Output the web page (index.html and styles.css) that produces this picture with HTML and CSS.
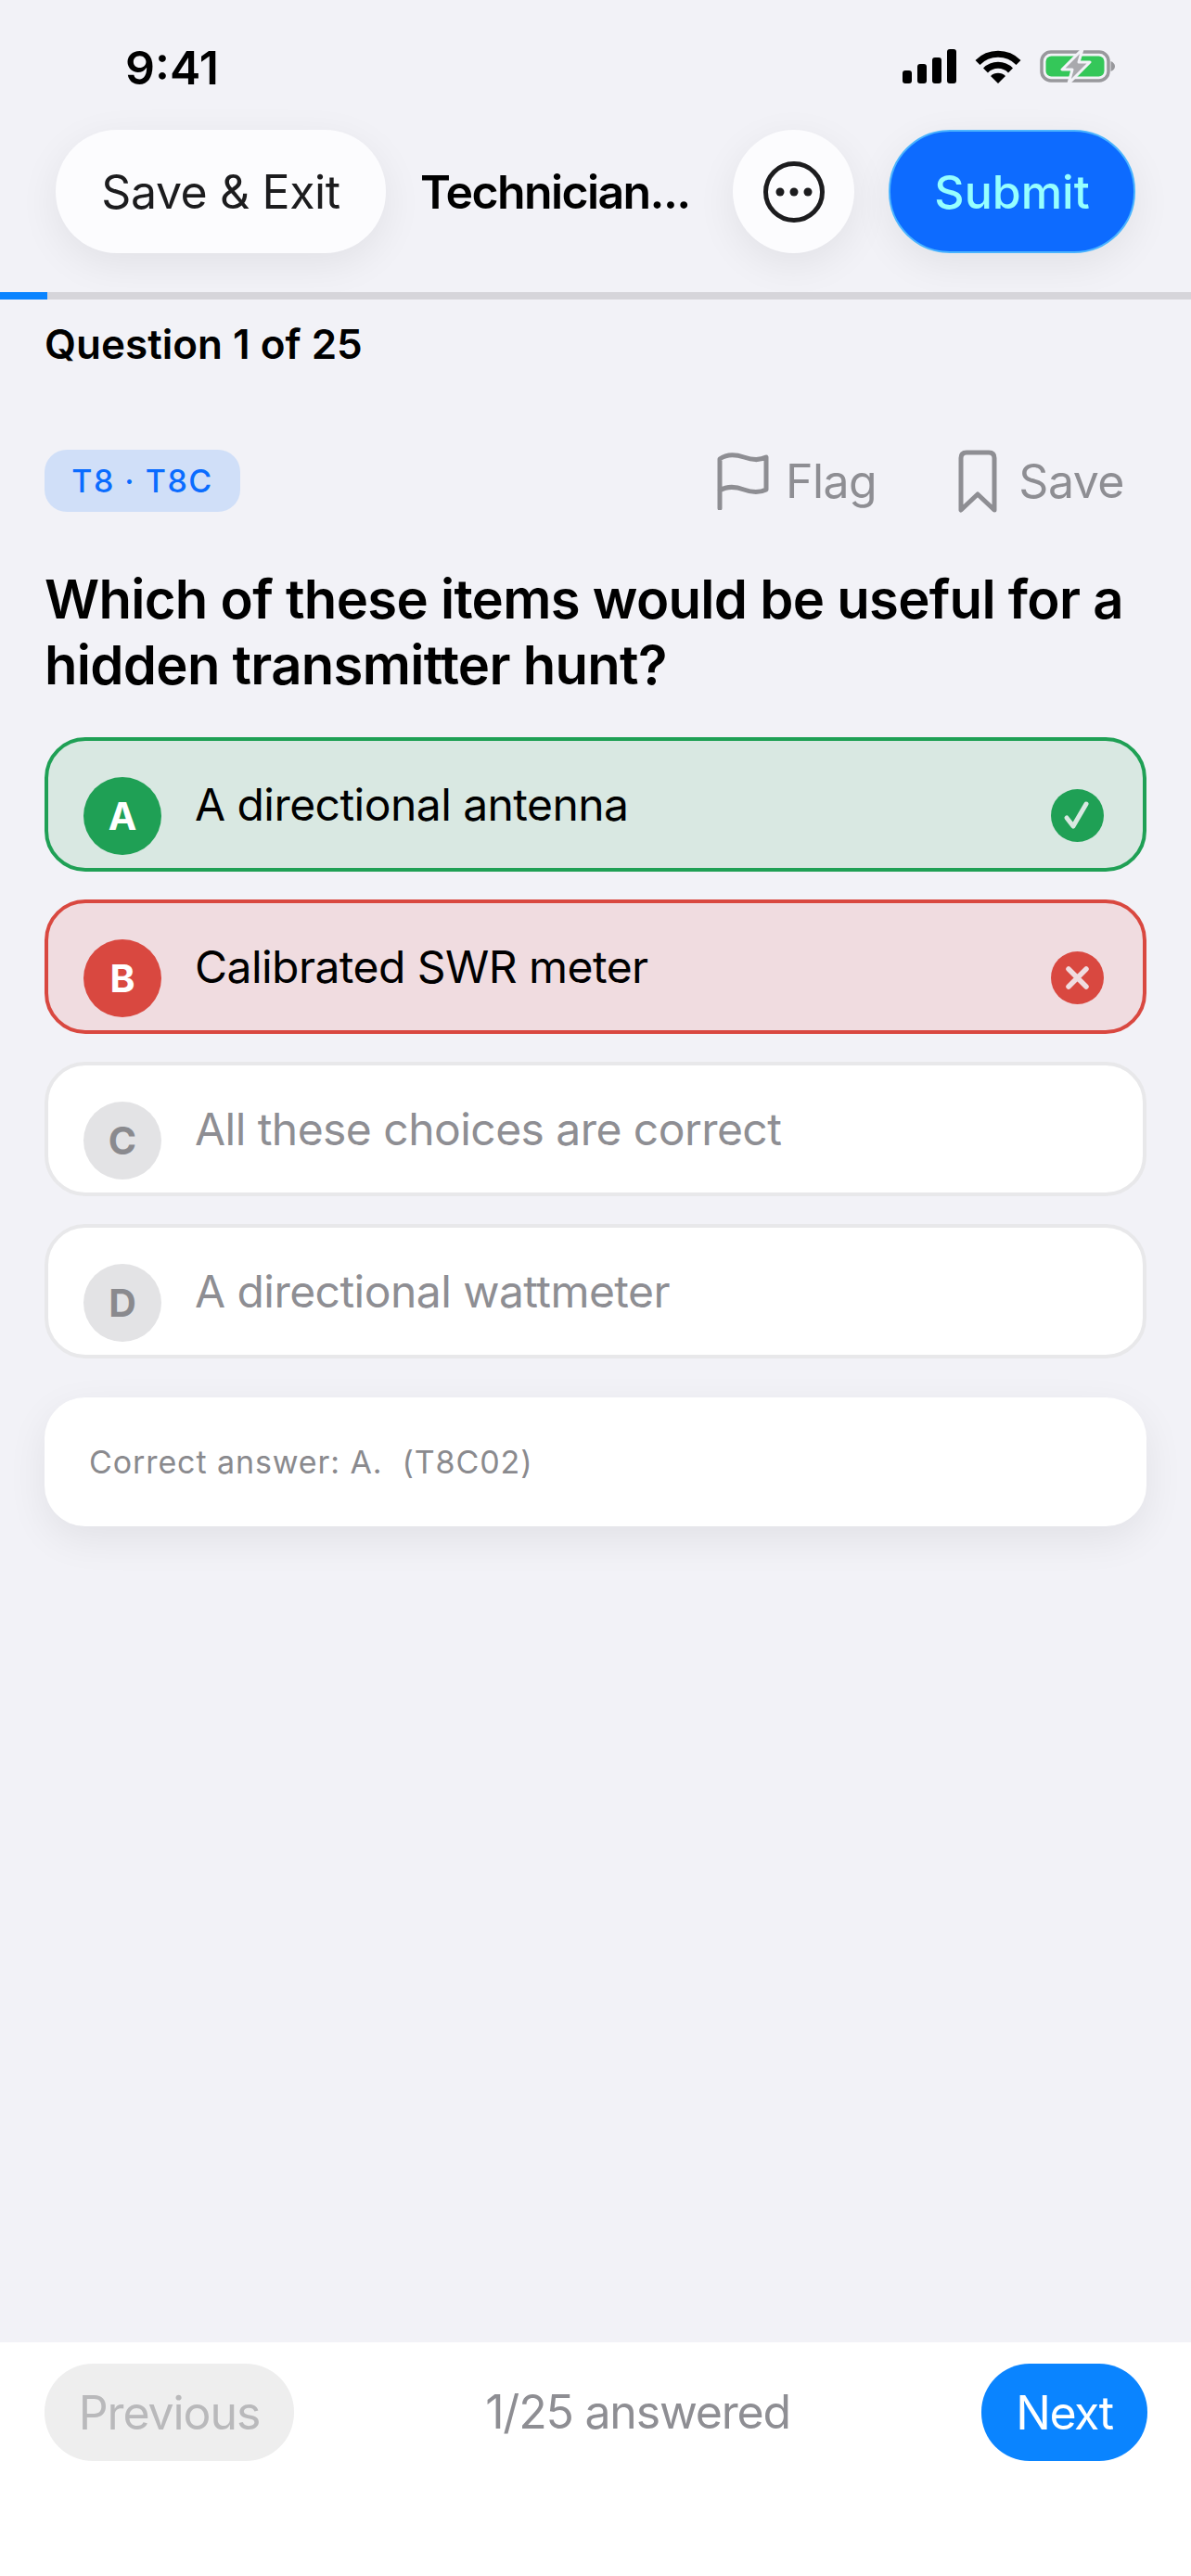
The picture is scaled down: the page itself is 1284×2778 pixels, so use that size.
FILE: index.html
```html
<!DOCTYPE html>
<html lang="en">
<head>
<meta charset="utf-8">
<title>Exam question</title>
<link rel="stylesheet" href="styles.css">
</head>
<body>
<div class="screen">
  <div class="status">
    <span class="time">9:41</span>
    <div class="status-icons">
      <svg class="signal" viewBox="0 0 58 37"><rect x="0" y="23" width="10" height="14" rx="3"/><rect x="16" y="16" width="10" height="21" rx="3"/><rect x="32" y="9" width="10" height="28" rx="3"/><rect x="48" y="0" width="10" height="37" rx="3"/></svg>
      <svg class="wifi" viewBox="0 0 50 37"><path d="M3 14.500A31 31 0 0 1 47 14.500" fill="none" stroke="#000" stroke-width="7"/><path d="M11.500 23A19 19 0 0 1 38.500 23" fill="none" stroke="#000" stroke-width="7"/><path d="M25 37L17 29A11.500 11.500 0 0 1 33 29Z"/></svg>
      <svg class="battery" viewBox="0 0 81 39"><rect x="2" y="4" width="72" height="31" rx="10" fill="none" stroke="#98989c" stroke-width="3.500"/><rect x="6.500" y="8.500" width="63" height="22" rx="6" fill="#34c759"/><path d="M76.500 14V25Q81 23 81 19.500T76.500 14Z" fill="#98989c"/><path d="M46 1L24 23H35L31 38L54 15H42Z" fill="#a9a9ad" stroke="#f2f2f7" stroke-width="3" stroke-linejoin="round"/></svg>
    </div>
  </div>

  <header class="topbar">
    <button class="pill pill-light">Save &amp; Exit</button>
    <div class="title">Technician...</div>
    <button class="round-btn" aria-label="More">
      <svg class="more" viewBox="0 0 66 66"><circle cx="33" cy="33" r="30.500" fill="none" stroke="#1c1c1e" stroke-width="5"/><circle cx="18" cy="33" r="4.500" fill="#1c1c1e"/><circle cx="33" cy="33" r="4.500" fill="#1c1c1e"/><circle cx="48" cy="33" r="4.500" fill="#1c1c1e"/></svg>
    </button>
    <button class="pill pill-submit">Submit</button>
  </header>

  <div class="progress"><div class="progress-fill" style="width:4%"></div></div>

  <main class="content">
    <div class="counter">Question 1 of 25</div>
    <div class="meta">
      <span class="tag">T8 · T8C</span>
      <div class="actions">
        <span class="action">
          <svg class="flag" viewBox="0 0 56 62"><path d="M3 60V7C11 1 20 2 29 5S45 9 53 5V40C45 44 37 43 29 40S11 36 3 41" fill="none" stroke="#8e8e93" stroke-width="5" stroke-linecap="round" stroke-linejoin="round"/></svg>
          Flag
        </span>
        <span class="action">
          <svg class="bookmark" viewBox="0 0 42 68"><path d="M3 65V9Q3 3 9 3H33Q39 3 39 9V65L21 48Z" fill="none" stroke="#8e8e93" stroke-width="5" stroke-linecap="round" stroke-linejoin="round"/></svg>
          Save
        </span>
      </div>
    </div>
    <h1 class="question">Which of these items would be useful for a hidden transmitter hunt?</h1>

    <div class="options">
      <div class="option correct">
        <span class="badge">A</span>
        <span class="opt-text">A directional antenna</span>
        <svg class="result" viewBox="0 0 57 57"><circle cx="28.500" cy="28.500" r="28.500" fill="#1fa055"/><path d="M17 31L24 40L38 16" fill="none" stroke="#d9e8e2" stroke-width="5" stroke-linecap="round" stroke-linejoin="round"/></svg>
      </div>
      <div class="option wrong">
        <span class="badge">B</span>
        <span class="opt-text">Calibrated SWR meter</span>
        <svg class="result" viewBox="0 0 57 57"><circle cx="28.500" cy="28.500" r="28.500" fill="#d94840"/><path d="M19 19L38 38M38 19L19 38" fill="none" stroke="#f0dce0" stroke-width="5.500" stroke-linecap="round"/></svg>
      </div>
      <div class="option">
        <span class="badge">C</span>
        <span class="opt-text">All these choices are correct</span>
      </div>
      <div class="option">
        <span class="badge">D</span>
        <span class="opt-text">A directional wattmeter</span>
      </div>
    </div>

    <div class="explain">Correct answer: A.&nbsp; (T8C02)</div>
  </main>

  <footer class="footer">
    <button class="nav nav-prev">Previous</button>
    <span class="answered">1/25 answered</span>
    <button class="nav nav-next">Next</button>
  </footer>
</div>
</body>
</html>
```

FILE: styles.css
```css
* { box-sizing: border-box; }

html, body {
  margin: 0;
  padding: 0;
}

body {
  font-family: Inter, "Liberation Sans", sans-serif;
  background: #f2f2f7;
  color: #000;
}

button {
  font-family: inherit;
  border: none;
  padding: 0;
}

.screen {
  width: 1284px;
  height: 2778px;
  display: flex;
  flex-direction: column;
  overflow: hidden;
}

/* Status bar */
.status {
  height: 140px;
  flex: none;
  padding: 6px 82px 0 135px;
  display: flex;
  align-items: center;
  justify-content: space-between;
}

.time {
  font-size: 50px;
  font-weight: 600;
}

.status-icons {
  display: flex;
  align-items: center;
  gap: 20px;
  margin-top: -4px;
}

.signal { width: 58px; height: 37px; }
.wifi { width: 50px; height: 37px; }
.battery { width: 81px; height: 39px; }

/* Top bar */
.topbar {
  flex: none;
  height: 133px;
  padding: 0 60px;
  display: flex;
  align-items: center;
  gap: 37px;
}

.pill {
  height: 133px;
  border-radius: 66px;
  font-size: 50px;
  flex: none;
}

.pill-light {
  width: 356px;
  background: #fcfcfe;
  color: #1c1c1e;
  letter-spacing: -0.4px;
  box-shadow: 0 12px 44px rgba(0, 0, 0, 0.07);
}

.title {
  flex: 1;
  min-width: 0;
  font-size: 50px;
  font-weight: 600;
  letter-spacing: -1.6px;
  white-space: nowrap;
}

.round-btn {
  width: 131px;
  height: 133px;
  border-radius: 50%;
  background: #fcfcfe;
  box-shadow: 0 12px 44px rgba(0, 0, 0, 0.07);
  display: flex;
  align-items: center;
  justify-content: center;
  flex: none;
}

.more { width: 66px; height: 66px; }

.pill-submit {
  width: 266px;
  background: #0d6bff;
  border: 2px solid #4ab4ff;
  color: #96ffff;
  font-weight: 500;
  box-shadow: 0 12px 44px rgba(0, 0, 0, 0.07);
}

/* Progress */
.progress {
  flex: none;
  height: 8px;
  margin-top: 42px;
  background: #d6d5da;
}

.progress-fill {
  height: 100%;
  background: #0a84ff;
}

/* Content */
.content {
  flex: 1;
  padding: 23px 48px 0;
}

.counter {
  font-size: 44px;
  font-weight: 600;
  line-height: 50px;
}

.meta {
  margin-top: 89px;
  display: flex;
  align-items: center;
  justify-content: space-between;
  height: 67px;
}

.tag {
  width: 211px;
  height: 67px;
  border-radius: 24px;
  background: #d0dff8;
  color: #0a6cff;
  font-size: 34px;
  font-weight: 500;
  letter-spacing: 1.500px;
  display: flex;
  align-items: center;
  justify-content: center;
}

.actions {
  display: flex;
  align-items: center;
  gap: 88px;
  padding-right: 24px;
}

.action {
  display: flex;
  align-items: center;
  gap: 24px;
  font-size: 50px;
  letter-spacing: -0.5px;
  color: #8e8e93;
}

.flag { width: 56px; height: 62px; margin-right: -6px; }
.bookmark { width: 42px; height: 68px; margin-right: -1px; }

.question {
  margin: 59px 0 0;
  font-size: 58px;
  font-weight: 600;
  line-height: 71px;
  letter-spacing: -0.7px;
  color: #000;
}

/* Options */
.options {
  margin-top: 42px;
  display: flex;
  flex-direction: column;
  gap: 30px;
}

.option {
  height: 145px;
  border: 4px solid #e8e8ea;
  border-radius: 44px;
  background: #fff;
  padding: 0 42px 0 38px;
  display: flex;
  align-items: center;
  gap: 36px;
  color: #8e8e93;
}

.badge {
  width: 84px;
  height: 84px;
  margin-top: 24px;
  border-radius: 50%;
  background: #e3e3e5;
  color: #8a8a8e;
  font-size: 41px;
  font-weight: 700;
  display: flex;
  align-items: center;
  justify-content: center;
  flex: none;
}

.opt-text {
  flex: 1;
  font-size: 48px;
  letter-spacing: -0.55px;
}

.result {
  width: 57px;
  height: 57px;
  margin-top: 24px;
  flex: none;
}

.correct {
  background: #d9e8e2;
  border-color: #1fa055;
  color: #000;
}

.correct .badge {
  background: #1fa055;
  color: #fff;
}

.wrong {
  background: #f0dce0;
  border-color: #d94840;
  color: #000;
}

.wrong .badge {
  background: #d94840;
  color: #fff;
}

.explain {
  margin-top: 42px;
  height: 139px;
  border-radius: 44px;
  background: #fff;
  padding: 0 48px;
  display: flex;
  align-items: center;
  font-size: 34px;
  letter-spacing: 0.9px;
  color: #8a8a8e;
  box-shadow: 0 14px 44px rgba(0, 0, 0, 0.07);
}

/* Footer */
.footer {
  flex: none;
  height: 252px;
  background: #fff;
  padding: 23px 47px 0 48px;
  display: flex;
  align-items: flex-start;
  justify-content: space-between;
}

.nav {
  height: 105px;
  border-radius: 52px;
  font-size: 50px;
}

.nav-prev {
  width: 269px;
  background: #eee;
  color: #b9b9bb;
  letter-spacing: -1.1px;
}

.nav-next {
  width: 179px;
  background: #0a84ff;
  color: #fff;
  letter-spacing: -1.5px;
}

.answered {
  line-height: 105px;
  font-size: 50px;
  letter-spacing: -1.2px;
  color: #8e8e93;
}
```
